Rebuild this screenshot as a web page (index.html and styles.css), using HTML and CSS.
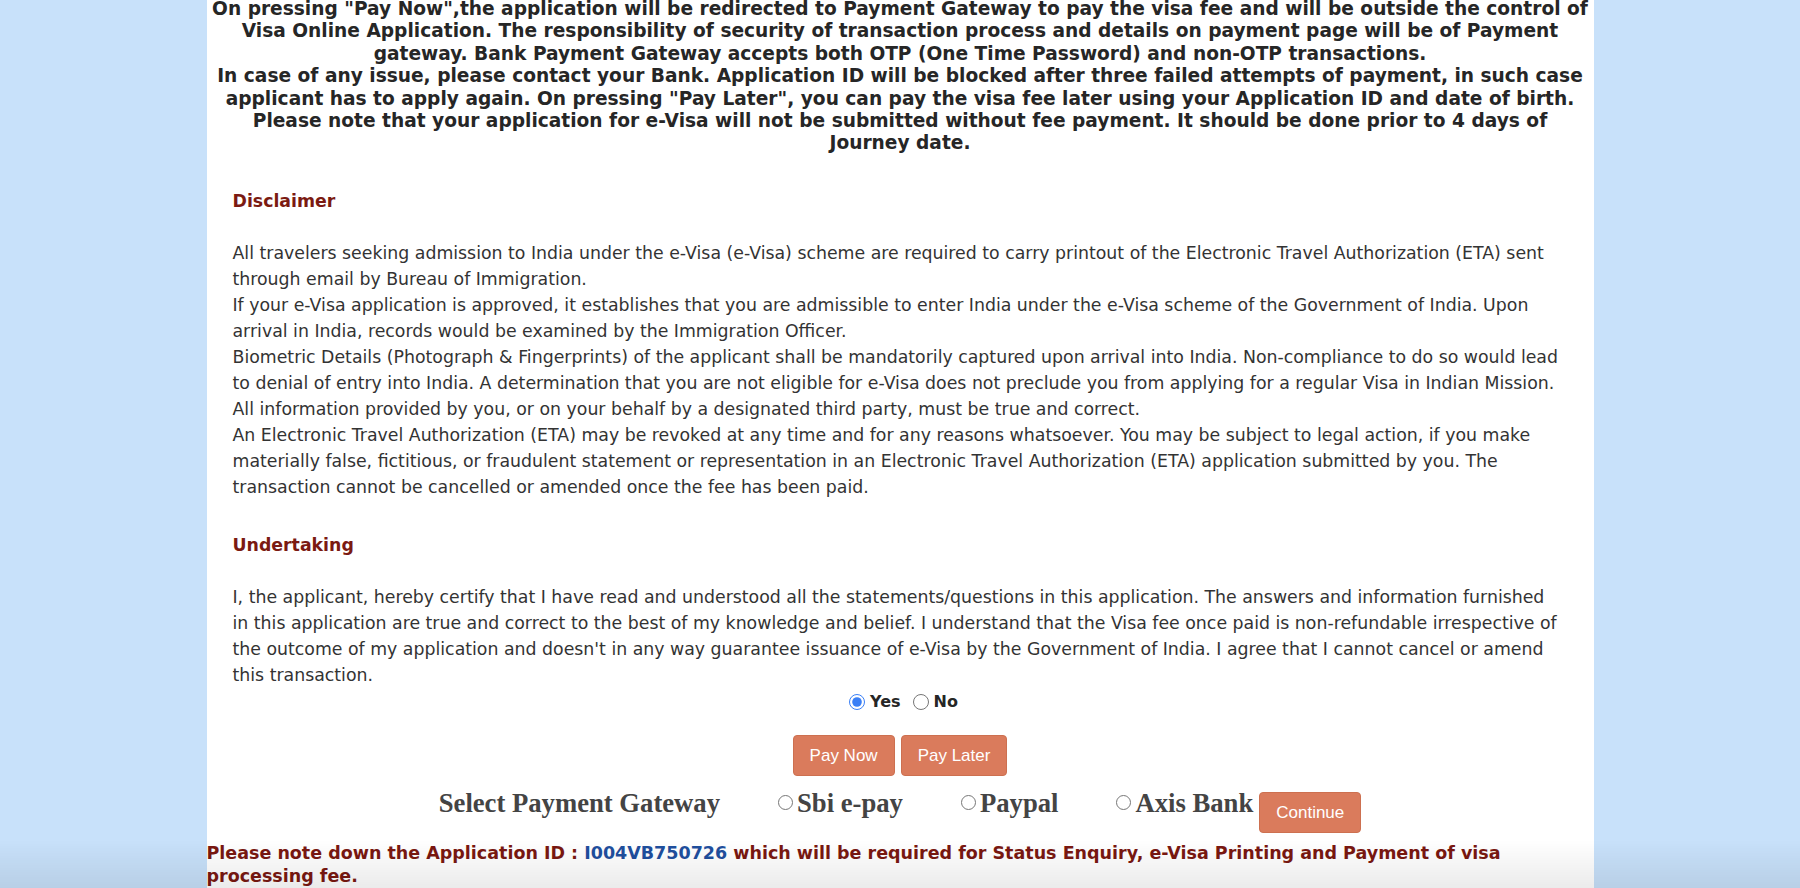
FILE: index.html
```html
<!DOCTYPE html>
<html lang="en">
<head>
<meta charset="utf-8">
<title>e-Visa Application - Payment</title>
<link rel="stylesheet" href="styles.css">
</head>
<body>
<div class="page">
  <p class="notice">On pressing "Pay Now",the application will be redirected to Payment Gateway to pay the visa fee and will be outside the control of Visa Online Application. The responsibility of security of transaction process and details on payment page will be of Payment gateway. Bank Payment Gateway accepts both OTP (One Time Password) and non-OTP transactions.<br>In case of any issue, please contact your Bank. Application ID will be blocked after three failed attempts of payment, in such case applicant has to apply again. On pressing "Pay Later", you can pay the visa fee later using your Application ID and date of birth.<br>Please note that your application for e-Visa will not be submitted without fee payment. It should be done prior to 4 days of Journey&nbsp;date.</p>

  <section class="block block-disclaimer">
    <h3 class="block-title">Disclaimer</h3>
    <p class="block-text">All travelers seeking admission to India under the e-Visa (e-Visa) scheme are required to carry printout of the Electronic Travel Authorization (ETA) sent through email by Bureau of Immigration.<br>If your e-Visa application is approved, it establishes that you are admissible to enter India under the e-Visa scheme of the Government of India. Upon arrival in India, records would be examined by the Immigration Officer.<br>Biometric Details (Photograph &amp; Fingerprints) of the applicant shall be mandatorily captured upon arrival into India. Non-compliance to do so would lead to denial of entry into India. A determination that you are not eligible for e-Visa does not preclude you from applying for a regular Visa in Indian Mission.<br>All information provided by you, or on your behalf by a designated third party, must be true and correct.<br>An Electronic Travel Authorization (ETA) may be revoked at any time and for any reasons whatsoever. You may be subject to legal action, if you make materially false, fictitious, or fraudulent statement or representation in an Electronic Travel Authorization (ETA) application submitted by you. The transaction cannot be cancelled or amended once the fee has been paid.</p>
  </section>

  <section class="block block-undertaking">
    <h3 class="block-title">Undertaking</h3>
    <p class="block-text">I, the applicant, hereby certify that I have read and understood all the statements/questions in this application. The answers and information furnished in this application are true and correct to the best of my knowledge and belief. I understand that the Visa fee once paid is non-refundable irrespective of the outcome of my application and doesn't in any way guarantee issuance of e-Visa by the Government of India. I agree that I cannot cancel or amend this transaction.</p>
  </section>

  <div class="consent">
    <label class="consent-opt"><input type="radio" name="agree" checked><span>Yes</span></label>
    <label class="consent-opt"><input type="radio" name="agree"><span>No</span></label>
  </div>

  <div class="actions">
    <button class="btn" type="button">Pay Now</button>
    <button class="btn" type="button">Pay Later</button>
  </div>

  <div class="gateway">
    <span class="gateway-label">Select Payment Gateway</span>
    <label class="gw-opt"><input type="radio" name="gateway"><span>Sbi e-pay</span></label>
    <label class="gw-opt"><input type="radio" name="gateway"><span>Paypal</span></label>
    <label class="gw-opt"><input type="radio" name="gateway"><span>Axis Bank</span></label>
    <button class="btn btn-continue" type="button">Continue</button>
  </div>

  <p class="appid"><span>Please note down the Application ID :</span> <span class="appid-num">I004VB750726</span> <span>which will be required for Status Enquiry, e-Visa Printing and Payment of visa</span> <span>processing fee.</span></p>
</div>
<div class="shade"></div>
</body>
</html>
```

FILE: styles.css
```css
html, body {
  margin: 0;
  padding: 0;
  height: 100%;
  overflow: hidden;
}

body {
  background: #c8e1fa;
  font-family: "DejaVu Sans", Verdana, sans-serif;
  color: #333333;
}

.page {
  width: 1387px;
  min-height: 100vh;
  margin: 0 auto;
  background: #ffffff;
}

.notice {
  margin: -2px 0 0;
  padding: 0;
  font-size: 18.6px;
  line-height: 22.4px;
  font-weight: bold;
  text-align: center;
  color: #262626;
}

.block {
  padding: 0 30px 0 26px;
}

.block-disclaimer {
  margin-top: 35px;
}

.block-undertaking {
  margin-top: 34.5px;
}

.block-title {
  margin: 0;
  font-size: 17.33px;
  line-height: 22px;
  font-weight: bold;
  color: #7b1a12;
}

.block-text {
  margin: 28px 0 0;
  font-size: 17.33px;
  line-height: 26px;
  color: #333333;
}

.consent {
  display: flex;
  justify-content: center;
  align-items: center;
  height: 22px;
  margin-top: 3px;
  padding-left: 7px;
  gap: 12px;
}

.consent-opt {
  display: flex;
  align-items: center;
  gap: 5px;
  font-size: 16px;
  line-height: 20px;
  font-weight: bold;
  color: #262626;
}

.consent-opt input {
  width: 16px;
  height: 16px;
  margin: 0;
  accent-color: #3a7ff6;
}

.actions {
  display: flex;
  justify-content: center;
  gap: 6px;
  margin-top: 22px;
}

.btn {
  padding: 10px 16px;
  border: 1px solid #cd7050;
  border-radius: 4px;
  background: #da7b5c;
  color: #ffffff;
  font-family: "Liberation Sans", Arial, sans-serif;
  font-size: 17px;
  line-height: 19px;
  cursor: pointer;
}

.gateway {
  display: flex;
  justify-content: center;
  align-items: flex-start;
  margin-top: 12px;
  font-family: "Liberation Serif", "Times New Roman", serif;
  font-size: 26.67px;
  line-height: 30px;
  font-weight: bold;
  color: #444444;
}

.gw-opt {
  display: flex;
  align-items: flex-start;
  margin-left: 58px;
}

.gw-opt input {
  width: 15px;
  height: 15px;
  margin: 7px 4px 0 0;
  accent-color: #3a7ff6;
}

.btn-continue {
  margin: 4px 0 0 6px;
}

.appid {
  margin: 9px 0 0;
  font-size: 17.5px;
  line-height: 23px;
  font-weight: bold;
  color: #7a1811;
}

.appid-num {
  color: #1f4f9e;
}

.shade {
  position: fixed;
  left: 0;
  right: 0;
  bottom: 0;
  height: 48px;
  background: linear-gradient(to bottom, rgba(0, 0, 0, 0), rgba(0, 0, 0, 0.08));
  pointer-events: none;
}
```
